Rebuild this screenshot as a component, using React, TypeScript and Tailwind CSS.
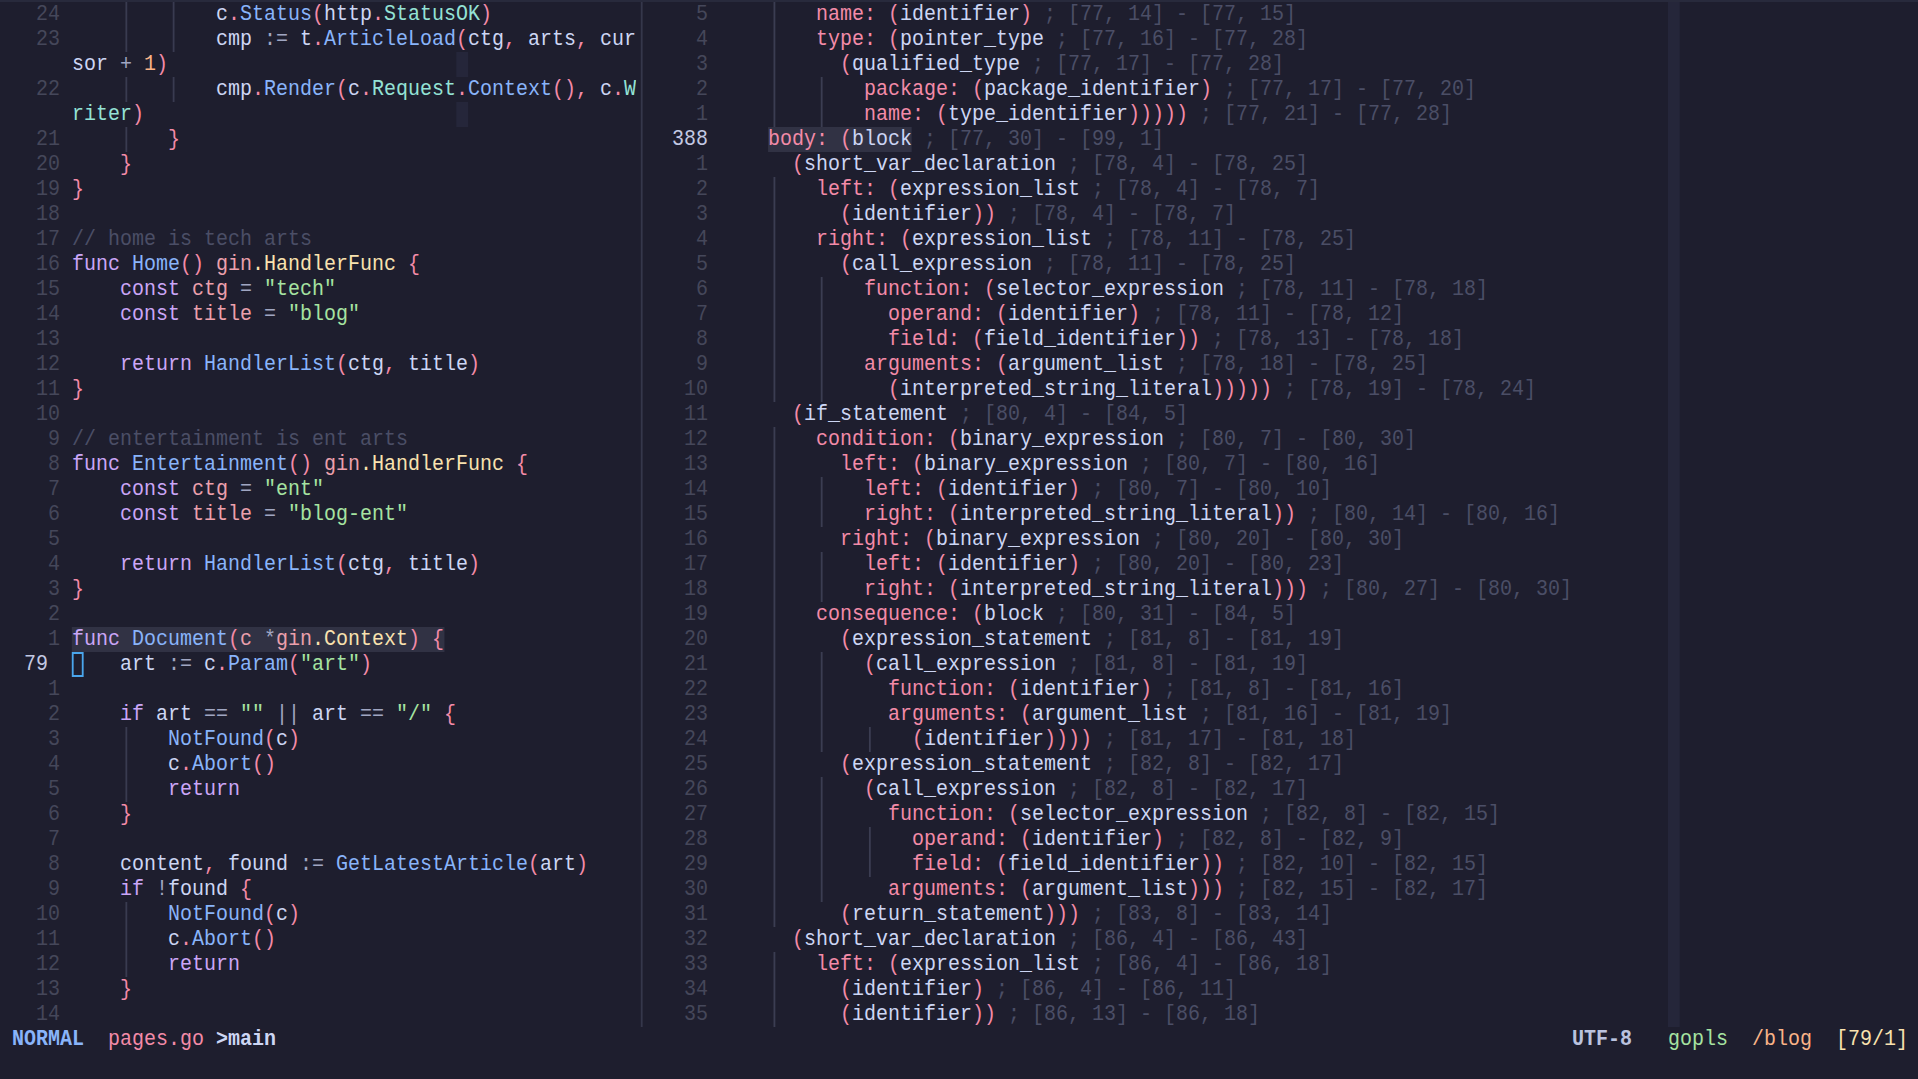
import React from "react";

const COL: Record<string, string> = {
  t: "text-[#cdd6f4]",
  k: "text-[#cba6f7]",
  f: "text-[#89b4fa]",
  p: "text-[#f38ba8]",
  o: "text-[#a0a6c2]",
  s: "text-[#a6e3a1]",
  n: "text-[#fab387]",
  y: "text-[#f9e2af]",
  m: "text-[#94e2d5]",
  v: "text-[#eba0ac]",
  c: "text-[#4b4e66]",
  d: "text-[#4b4e66]",
  _: "",
};

const GUIDE: Record<number, string> = {
  4: "left-[calc(4.5ch-1px)]",
  8: "left-[calc(8.5ch-1px)]",
  12: "left-[calc(12.5ch-1px)]",
  16: "left-[calc(16.5ch-1px)]",
};

type LRow = {
  n?: string;
  cur?: boolean;
  g?: number[];
  i?: number;
  wrap?: boolean;
  hl?: boolean;
  cursor?: boolean;
  code: string;
};

const LEFT: LRow[] = [
  { n: "24", g: [4, 8], i: 12, code: "tc¦p.¦fStatus¦p(¦thttp¦p.¦mStatusOK¦p)" },
  { n: "23", g: [4, 8], i: 12, code: "tcmp¦_ ¦o:=¦_ ¦tt¦p.¦fArticleLoad¦p(¦tctg¦p,¦_ ¦tarts¦p,¦_ ¦tcur" },
  { wrap: true, code: "tsor¦_ ¦o+¦_ ¦n1¦p)" },
  { n: "22", g: [4, 8], i: 12, code: "tcmp¦p.¦fRender¦p(¦tc¦p.¦mRequest¦p.¦fContext¦p()¦p,¦_ ¦tc¦p.¦mW" },
  { wrap: true, code: "mriter¦p)" },
  { n: "21", g: [4], i: 8, code: "p}" },
  { n: "20", i: 4, code: "p}" },
  { n: "19", code: "p}" },
  { n: "18", code: "" },
  { n: "17", code: "c// home is tech arts" },
  { n: "16", code: "kfunc¦_ ¦fHome¦p()¦_ ¦vgin¦y.HandlerFunc¦_ ¦p{" },
  { n: "15", i: 4, code: 'kconst¦_ ¦vctg¦_ ¦o=¦_ ¦s"tech"' },
  { n: "14", i: 4, code: 'kconst¦_ ¦vtitle¦_ ¦o=¦_ ¦s"blog"' },
  { n: "13", code: "" },
  { n: "12", i: 4, code: "kreturn¦_ ¦fHandlerList¦p(¦tctg¦p,¦_ ¦ttitle¦p)" },
  { n: "11", code: "p}" },
  { n: "10", code: "" },
  { n: "9", code: "c// entertainment is ent arts" },
  { n: "8", code: "kfunc¦_ ¦fEntertainment¦p()¦_ ¦vgin¦y.HandlerFunc¦_ ¦p{" },
  { n: "7", i: 4, code: 'kconst¦_ ¦vctg¦_ ¦o=¦_ ¦s"ent"' },
  { n: "6", i: 4, code: 'kconst¦_ ¦vtitle¦_ ¦o=¦_ ¦s"blog-ent"' },
  { n: "5", code: "" },
  { n: "4", i: 4, code: "kreturn¦_ ¦fHandlerList¦p(¦tctg¦p,¦_ ¦ttitle¦p)" },
  { n: "3", code: "p}" },
  { n: "2", code: "" },
  { n: "1", hl: true, code: "kfunc¦_ ¦fDocument¦p(¦vc¦_ ¦o*¦vgin¦y.Context¦p)¦_ ¦p{" },
  { n: "79", cur: true, cursor: true, i: 4, code: 'tart¦_ ¦o:=¦_ ¦tc¦p.¦fParam¦p(¦s"art"¦p)' },
  { n: "1", code: "" },
  { n: "2", i: 4, code: 'kif¦_ ¦tart¦_ ¦o==¦_ ¦s""¦_ ¦o||¦_ ¦tart¦_ ¦o==¦_ ¦s"/"¦_ ¦p{' },
  { n: "3", g: [4], i: 8, code: "fNotFound¦p(¦tc¦p)" },
  { n: "4", g: [4], i: 8, code: "tc¦p.¦fAbort¦p()" },
  { n: "5", g: [4], i: 8, code: "kreturn" },
  { n: "6", i: 4, code: "p}" },
  { n: "7", code: "" },
  { n: "8", i: 4, code: "tcontent¦p,¦_ ¦tfound¦_ ¦o:=¦_ ¦fGetLatestArticle¦p(¦tart¦p)" },
  { n: "9", i: 4, code: "kif¦_ ¦o!¦tfound¦_ ¦p{" },
  { n: "10", g: [4], i: 8, code: "fNotFound¦p(¦tc¦p)" },
  { n: "11", g: [4], i: 8, code: "tc¦p.¦fAbort¦p()" },
  { n: "12", g: [4], i: 8, code: "kreturn" },
  { n: "13", i: 4, code: "p}" },
  { n: "14", code: "" },
];

type RRow = [string, number, string, string];

const RIGHT: RRow[] = [
  ["5", 8, "name: (identifier)", "[77, 14] - [77, 15]"],
  ["4", 8, "type: (pointer_type", "[77, 16] - [77, 28]"],
  ["3", 10, "(qualified_type", "[77, 17] - [77, 28]"],
  ["2", 12, "package: (package_identifier)", "[77, 17] - [77, 20]"],
  ["1", 12, "name: (type_identifier)))))", "[77, 21] - [77, 28]"],
  ["388", 4, "body: (block", "[77, 30] - [99, 1]"],
  ["1", 6, "(short_var_declaration", "[78, 4] - [78, 25]"],
  ["2", 8, "left: (expression_list", "[78, 4] - [78, 7]"],
  ["3", 10, "(identifier))", "[78, 4] - [78, 7]"],
  ["4", 8, "right: (expression_list", "[78, 11] - [78, 25]"],
  ["5", 10, "(call_expression", "[78, 11] - [78, 25]"],
  ["6", 12, "function: (selector_expression", "[78, 11] - [78, 18]"],
  ["7", 14, "operand: (identifier)", "[78, 11] - [78, 12]"],
  ["8", 14, "field: (field_identifier))", "[78, 13] - [78, 18]"],
  ["9", 12, "arguments: (argument_list", "[78, 18] - [78, 25]"],
  ["10", 14, "(interpreted_string_literal)))))", "[78, 19] - [78, 24]"],
  ["11", 6, "(if_statement", "[80, 4] - [84, 5]"],
  ["12", 8, "condition: (binary_expression", "[80, 7] - [80, 30]"],
  ["13", 10, "left: (binary_expression", "[80, 7] - [80, 16]"],
  ["14", 12, "left: (identifier)", "[80, 7] - [80, 10]"],
  ["15", 12, "right: (interpreted_string_literal))", "[80, 14] - [80, 16]"],
  ["16", 10, "right: (binary_expression", "[80, 20] - [80, 30]"],
  ["17", 12, "left: (identifier)", "[80, 20] - [80, 23]"],
  ["18", 12, "right: (interpreted_string_literal)))", "[80, 27] - [80, 30]"],
  ["19", 8, "consequence: (block", "[80, 31] - [84, 5]"],
  ["20", 10, "(expression_statement", "[81, 8] - [81, 19]"],
  ["21", 12, "(call_expression", "[81, 8] - [81, 19]"],
  ["22", 14, "function: (identifier)", "[81, 8] - [81, 16]"],
  ["23", 14, "arguments: (argument_list", "[81, 16] - [81, 19]"],
  ["24", 16, "(identifier))))", "[81, 17] - [81, 18]"],
  ["25", 10, "(expression_statement", "[82, 8] - [82, 17]"],
  ["26", 12, "(call_expression", "[82, 8] - [82, 17]"],
  ["27", 14, "function: (selector_expression", "[82, 8] - [82, 15]"],
  ["28", 16, "operand: (identifier)", "[82, 8] - [82, 9]"],
  ["29", 16, "field: (field_identifier))", "[82, 10] - [82, 15]"],
  ["30", 14, "arguments: (argument_list)))", "[82, 15] - [82, 17]"],
  ["31", 10, "(return_statement)))", "[83, 8] - [83, 14]"],
  ["32", 6, "(short_var_declaration", "[86, 4] - [86, 43]"],
  ["33", 8, "left: (expression_list", "[86, 4] - [86, 18]"],
  ["34", 10, "(identifier)", "[86, 4] - [86, 11]"],
  ["35", 10, "(identifier))", "[86, 13] - [86, 18]"],
];

function Tokens({ code }: { code: string }) {
  if (!code) return null;
  return (
    <>
      {code.split("¦").map((tk, idx) => (
        <span key={idx} className={COL[tk[0]]}>
          {tk.slice(1)}
        </span>
      ))}
    </>
  );
}

function Gutter({ n, cur }: { n?: string; cur?: boolean }) {
  return (
    <div className="flex w-[6ch] shrink-0">
      <div className="w-[2ch]" />
      <div
        className={
          cur
            ? "w-[3ch] text-left text-[#c3c9e3]"
            : "w-[3ch] text-right text-[#45475a]"
        }
      >
        {n ?? ""}
      </div>
      <div className="w-[1ch]" />
    </div>
  );
}

function Guides({ g, color }: { g?: number[]; color: string }) {
  if (!g) return null;
  return (
    <>
      {g.map((x) => (
        <span
          key={x}
          className={`absolute top-0 h-full w-[2px] ${GUIDE[x]} ${color}`}
        />
      ))}
    </>
  );
}

function LeftPane() {
  return (
    <div className="w-[53ch] shrink-0 overflow-hidden">
      {LEFT.map((r, idx) => (
        <div key={idx} className="flex h-[25px]">
          <Gutter n={r.n} cur={r.cur} />
          <div className="relative flex-1 whitespace-pre">
            {r.wrap && (
              <span className="absolute top-0 left-[32ch] h-full w-[1ch] bg-[#25263a]" />
            )}
            <Guides g={r.g} color="bg-[#393b50]" />
            {r.cursor && (
              <span className="absolute top-0 left-0 h-full w-[1ch] border-2 border-[#4aa6ec]" />
            )}
            <span className="relative">
              {" ".repeat(r.i ?? 0)}
              {r.hl ? (
                <span className="inline-block h-[25px] bg-[#313244]">
                  <Tokens code={r.code} />
                </span>
              ) : (
                <Tokens code={r.code} />
              )}
            </span>
          </div>
        </div>
      ))}
    </div>
  );
}

function NodeText({ s }: { s: string }) {
  const m = s.match(/^(?:(\w+:) )?\(([a-z_]+)(\)*)$/);
  if (!m) return <span className="text-[#cdd6f4]">{s}</span>;
  return (
    <>
      {m[1] && <span className="text-[#f38ba8]">{m[1]} </span>}
      <span className="text-[#f38ba8]">(</span>
      <span className="text-[#cdd6f4]">{m[2]}</span>
      {m[3] && <span className="text-[#f38ba8]">{m[3]}</span>}
    </>
  );
}

function RightPane() {
  return (
    <div className="relative flex-1 overflow-hidden">
      <div className="absolute top-0 bottom-0 left-[85ch] w-[1ch] bg-[#25263a]" />
      {RIGHT.map(([n, ind, node, range], idx) => {
        const cur = n === "388";
        const g = [4, 8, 12].filter((x) => x + 4 <= ind);
        return (
          <div key={idx} className="relative flex h-[25px]">
            <Gutter n={n} cur={cur} />
            <div className="relative flex-1 whitespace-pre">
              <Guides g={g} color="bg-[#3b3d52]" />
              <span className="relative">
                {" ".repeat(ind)}
                {cur ? (
                  <span className="inline-block h-[25px] bg-[#313244]">
                    <NodeText s={node} />
                  </span>
                ) : (
                  <NodeText s={node} />
                )}
                <span className="text-[#4b4e66]">{` ; ${range}`}</span>
              </span>
            </div>
          </div>
        );
      })}
    </div>
  );
}

export default function App() {
  return (
    <div className="h-[1079px] w-[1918px] overflow-hidden bg-[#1e1e2e]">
      <div className="w-[160ch] origin-top-left scale-x-[0.90894] font-['Liberation_Mono',monospace] text-[22px] leading-[25px]">
        <div className="h-[2px] bg-[#282a3c]" />
        <div className="flex h-[1025px]">
          <LeftPane />
          <div className="relative w-[1ch] shrink-0">
            <span className="absolute top-0 left-[calc(0.5ch-1px)] h-full w-[2px] bg-[#35374b]" />
          </div>
          <RightPane />
        </div>
        <div className="flex h-[25px] justify-between whitespace-pre">
          <div>
            <span> </span>
            <span className="font-bold text-[#89b4fa]">NORMAL</span>
            <span>  </span>
            <span className="text-[#f38ba8]">pages.go</span>
            <span> </span>
            <span className="font-bold text-[#cdd6f4]">&gt;main</span>
          </div>
          <div>
            <span className="font-bold text-[#bac2de]">UTF-8</span>
            <span>   </span>
            <span className="text-[#a6e3a1]">gopls</span>
            <span>  </span>
            <span className="text-[#fab387]">/blog</span>
            <span>  </span>
            <span className="text-[#f9e2af]">[79/1]</span>
            <span> </span>
          </div>
        </div>
      </div>
    </div>
  );
}
